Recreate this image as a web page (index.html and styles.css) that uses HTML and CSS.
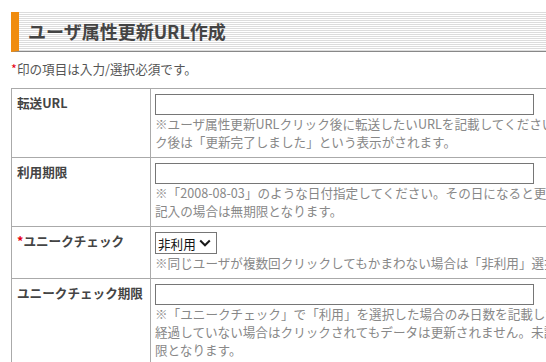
FILE: index.html
```html
<!DOCTYPE html>
<html lang="ja">
<head>
  <meta charset="UTF-8">
  <title>ユーザ属性更新URL作成</title>
  <link rel="stylesheet" href="styles.css">
</head>
<body>

  <div class="page">
    <h2 class="title">ユーザ属性更新URL作成</h2>

    <p class="lead"><span class="req">*</span>印の項目は入力/選択必須です。</p>

    <form id="urlForm">
      <table class="form-table">
        <colgroup>
          <col class="col-label">
          <col class="col-field">
        </colgroup>
        <tr>
          <th>転送URL</th>
          <td>
            <input type="text" name="redirect_url" class="text-input">
            <p class="note">※ユーザ属性更新URLクリック後に転送したいURLを記載してください。クリッ<br>ク後は「更新完了しました」という表示がされます。</p>
          </td>
        </tr>
        <tr>
          <th>利用期限</th>
          <td>
            <input type="text" name="limit_date" class="text-input">
            <p class="note">※「2008-08-03」のような日付指定してください。その日になると更新されません。未<br>記入の場合は無期限となります。</p>
          </td>
        </tr>
        <tr>
          <th><span class="req">*</span>ユニークチェック</th>
          <td>
            <span class="select-wrap">
              <select name="unique_check" class="select-input">
                <option value="0">非利用</option>
                <option value="1">利用</option>
              </select>
              <svg class="select-arrow" width="12" height="8" viewBox="0 0 12 8"><path d="M1.2 1.5 L6 6.3 L10.8 1.5" fill="none" stroke="#1a1a1a" stroke-width="2"/></svg>
            </span>
            <p class="note">※同じユーザが複数回クリックしてもかまわない場合は「非利用」選択してください。</p>
          </td>
        </tr>
        <tr>
          <th>ユニークチェック期限</th>
          <td>
            <input type="text" name="unique_days" class="text-input">
            <p class="note">※「ユニークチェック」で「利用」を選択した場合のみ日数を記載してください。その日数<br>経過していない場合はクリックされてもデータは更新されません。未記入の場合は無期<br>限となります。</p>
          </td>
        </tr>
      </table>
    </form>
  </div>

</body>
</html>
```

FILE: styles.css
```css
html, body {
  overflow: hidden;
}
body {
  margin: 0;
  font-family: "Noto Sans CJK JP", "Noto Sans", sans-serif;
  font-size: 12.6px;
  color: #555;
  background-color: #fff;
}
.page {
  padding: 12px 0 0 11px;
}
.title {
  margin: 0;
  height: 39px;
  line-height: 39px;
  padding-left: 9px;
  font-size: 18px;
  font-weight: bold;
  color: #444;
  border-left: 8px solid #f08c0f;
  border-bottom: 1px solid #888;
  background: repeating-linear-gradient(#dcdcdc 0 1px, #fff 1px 2px);
}
.lead {
  margin: 8px 0 0;
  line-height: 18px;
  color: #555;
}
.req {
  color: #e60012;
}
.form-table {
  margin-top: 10px;
  width: 640px;
  table-layout: fixed;
  border-collapse: collapse;
}
.col-label {
  width: 139px;
}
.form-table th, .form-table td {
  border: 1px solid #aaa;
  vertical-align: top;
  text-align: left;
  line-height: 18px;
}
.form-table th {
  padding: 5px 5px 6px;
  font-weight: bold;
  color: #444;
  white-space: nowrap;
}
.form-table td {
  padding: 5px 4px 6px;
}
.text-input {
  display: block;
  box-sizing: border-box;
  width: 379px;
  height: 21px;
  margin: 0;
  padding: 1px 3px;
  border: 1px solid #767676;
  border-radius: 0;
  font-family: inherit;
  font-size: 13px;
}
.select-wrap {
  position: relative;
  display: inline-block;
  vertical-align: top;
}
.select-input {
  display: block;
  box-sizing: border-box;
  width: 62px;
  height: 22px;
  margin: 0;
  padding: 0 0 0 2px;
  border: 1px solid #767676;
  border-radius: 0;
  background: #fff;
  color: #111;
  font-family: inherit;
  font-size: 12.6px;
  -webkit-appearance: none;
  appearance: none;
}
.select-arrow {
  position: absolute;
  right: 6px;
  top: 7px;
  pointer-events: none;
}
.note {
  margin: 0;
  color: #888;
  white-space: nowrap;
}
```
